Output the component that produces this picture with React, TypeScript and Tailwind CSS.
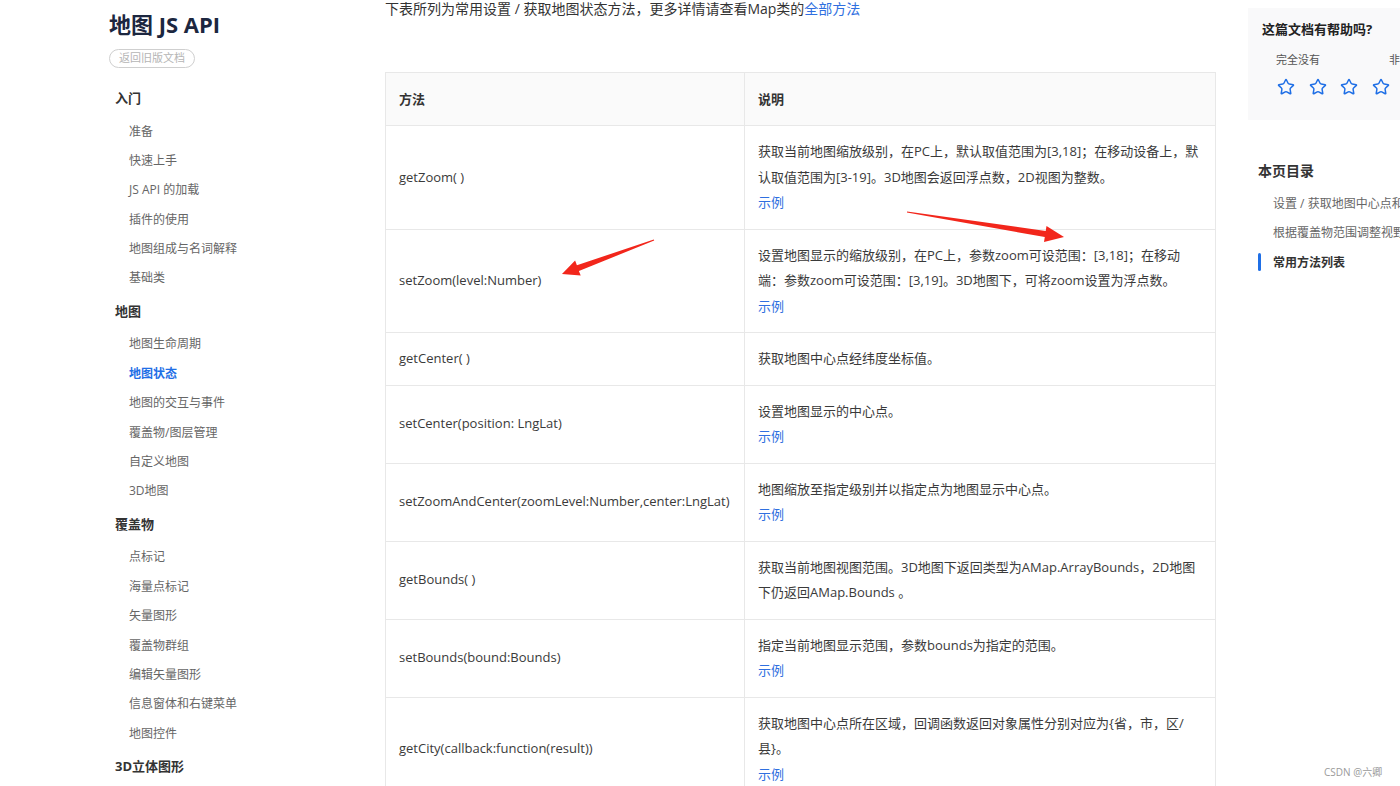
import React from 'react';
import { Star } from 'lucide-react';

type NavSection = { title: string; items: string[] };

const nav: NavSection[] = [
  { title: '入门', items: ['准备', '快速上手', 'JS API 的加载', '插件的使用', '地图组成与名词解释', '基础类'] },
  { title: '地图', items: ['地图生命周期', '地图状态', '地图的交互与事件', '覆盖物/图层管理', '自定义地图', '3D地图'] },
  { title: '覆盖物', items: ['点标记', '海量点标记', '矢量图形', '覆盖物群组', '编辑矢量图形', '信息窗体和右键菜单', '地图控件'] },
  { title: '3D立体图形', items: [] },
];

type Row = { method: string; desc: string[]; example?: boolean };

const rows: Row[] = [
  {
    method: 'getZoom( )',
    desc: ['获取当前地图缩放级别，在PC上，默认取值范围为[3,18]；在移动设备上，默', '认取值范围为[3-19]。3D地图会返回浮点数，2D视图为整数。'],
    example: true,
  },
  {
    method: 'setZoom(level:Number)',
    desc: ['设置地图显示的缩放级别，在PC上，参数zoom可设范围：[3,18]；在移动', '端：参数zoom可设范围：[3,19]。3D地图下，可将zoom设置为浮点数。'],
    example: true,
  },
  { method: 'getCenter( )', desc: ['获取地图中心点经纬度坐标值。'] },
  { method: 'setCenter(position: LngLat)', desc: ['设置地图显示的中心点。'], example: true },
  { method: 'setZoomAndCenter(zoomLevel:Number,center:LngLat)', desc: ['地图缩放至指定级别并以指定点为地图显示中心点。'], example: true },
  { method: 'getBounds( )', desc: ['获取当前地图视图范围。3D地图下返回类型为AMap.ArrayBounds，2D地图', '下仍返回AMap.Bounds 。'] },
  { method: 'setBounds(bound:Bounds)', desc: ['指定当前地图显示范围，参数bounds为指定的范围。'], example: true },
  {
    method: 'getCity(callback:function(result))',
    desc: ['获取地图中心点所在区域，回调函数返回对象属性分别对应为{省，市，区/', '县}。'],
    example: true,
  },
];

const Sidebar: React.FC = () => (
  <aside className="w-[385px] shrink-0 pl-[109px]">
    <h1 className="mt-[9px] text-[22px] leading-[30px] font-bold text-[#1c2740]">地图 JS API</h1>
    <div className="mt-[10px] inline-flex h-[19px] w-[86px] items-center justify-center rounded-full border border-[#cfcfcf] text-[11px] text-[#b5b5b5]">
      返回旧版文档
    </div>
    <nav className="mt-[12px] pl-[6px]">
      {nav.map((s) => (
        <div key={s.title}>
          <div className="flex h-[36.6px] items-center text-[13px] font-bold text-[#333]">{s.title}</div>
          {s.items.map((it) => (
            <div
              key={it}
              className={
                it === '地图状态'
                  ? 'flex h-[29.4px] items-center pl-[14px] text-[12px] font-bold text-[#1f6fe6]'
                  : 'flex h-[29.4px] items-center pl-[14px] text-[12px] text-[#666]'
              }
            >
              {it}
            </div>
          ))}
        </div>
      ))}
    </nav>
  </aside>
);

const MethodTable: React.FC = () => (
  <table className="mt-[53px] w-[830px] table-fixed border-collapse text-[13px] text-[#3a3a3a]">
    <colgroup>
      <col className="w-[359px]" />
      <col className="w-[471px]" />
    </colgroup>
    <thead>
      <tr className="bg-[#fafafa]">
        <th className="h-[53px] border border-[#e8e8e8] px-[13px] py-0 text-left leading-[26px] font-bold text-[#333]">方法</th>
        <th className="h-[53px] border border-[#e8e8e8] px-[13px] py-0 text-left leading-[26px] font-bold text-[#333]">说明</th>
      </tr>
    </thead>
    <tbody>
      {rows.map((r) => (
        <tr key={r.method}>
          <td className="border border-[#e8e8e8] px-[13px] py-[13px] align-middle leading-[25.5px] whitespace-nowrap">{r.method}</td>
          <td className="border border-[#e8e8e8] px-[13px] py-[13px] align-top leading-[25.5px]">
            {r.desc.map((d) => (
              <div key={d} className="h-[25.5px] whitespace-nowrap">{d}</div>
            ))}
            {r.example && <div className="h-[25.5px] text-[#2f6fe0]">示例</div>}
          </td>
        </tr>
      ))}
    </tbody>
  </table>
);

const RightPanel: React.FC = () => (
  <aside className="ml-[33px] w-[240px] shrink-0">
    <div className="mt-[8px] bg-[#f9f9fa] pt-[12px] pb-[24px] pl-[14px]">
      <div className="text-[13px] leading-[18px] font-bold text-[#222]">这篇文档有帮助吗?</div>
      <div className="mt-[14px] flex pl-[14px] text-[11px] leading-[16px] text-[#555]">
        <span>完全没有</span>
        <span className="ml-[69px]">非常有帮助</span>
      </div>
      <div className="mt-[10px] flex gap-[13.5px] pl-[15px]">
        {[0, 1, 2, 3, 4].map((i) => (
          <Star key={i} size={18} strokeWidth={2} className="text-[#1f6fe6]" />
        ))}
      </div>
    </div>
    <div className="mt-[41px] pl-[10px] text-[14px] leading-[20px] font-bold text-[#333]">本页目录</div>
    <div className="mt-[8px] text-[12px] whitespace-nowrap">
      <div className="flex h-[29.5px] items-center pl-[25px] text-[#666]">设置 / 获取地图中心点和级别</div>
      <div className="flex h-[29.5px] items-center pl-[25px] text-[#666]">根据覆盖物范围调整视野</div>
      <div className="relative flex h-[29.5px] items-center pl-[25px] font-bold text-[#333]">
        <span className="absolute left-[10px] top-[5px] h-[18px] w-[3px] rounded-sm bg-[#1f6fe6]" />
        常用方法列表
      </div>
    </div>
  </aside>
);

// red annotation arrows drawn over the screenshot
const Arrows: React.FC = () => (
  <svg className="pointer-events-none absolute inset-0" width="1400" height="786" viewBox="0 0 1400 786">
    <polygon
      fill="#f2261b"
      points="653.8,239.4 576.9,265.3 575.1,260.6 562,274 580.7,275.6 578.9,270.9 654.2,240.6"
    />
    <polygon
      fill="#f2261b"
      points="907.1,211.4 1045.7,231.0 1046.5,226.1 1064,237 1044.0,241.9 1044.8,237.0 906.9,212.6"
    />
  </svg>
);

export default function App() {
  return (
    <div className="relative h-[786px] w-[1400px] overflow-hidden bg-white font-['Open_Sans','Noto_Sans_CJK_SC',sans-serif]">
      <div className="flex">
        <Sidebar />
        <main className="w-[830px] shrink-0">
          <p className="-mt-[1px] text-[14px] leading-[20px] text-[#333]">
            下表所列为常用设置 / 获取地图状态方法，更多详情请查看Map类的<span className="text-[#2f6fe0]">全部方法</span>
          </p>
          <MethodTable />
        </main>
        <RightPanel />
      </div>
      <Arrows />
      <div className="absolute left-[1324px] top-[765px] text-[10px] leading-[14px] text-[#9a9a9a]">CSDN @六卿</div>
    </div>
  );
}
